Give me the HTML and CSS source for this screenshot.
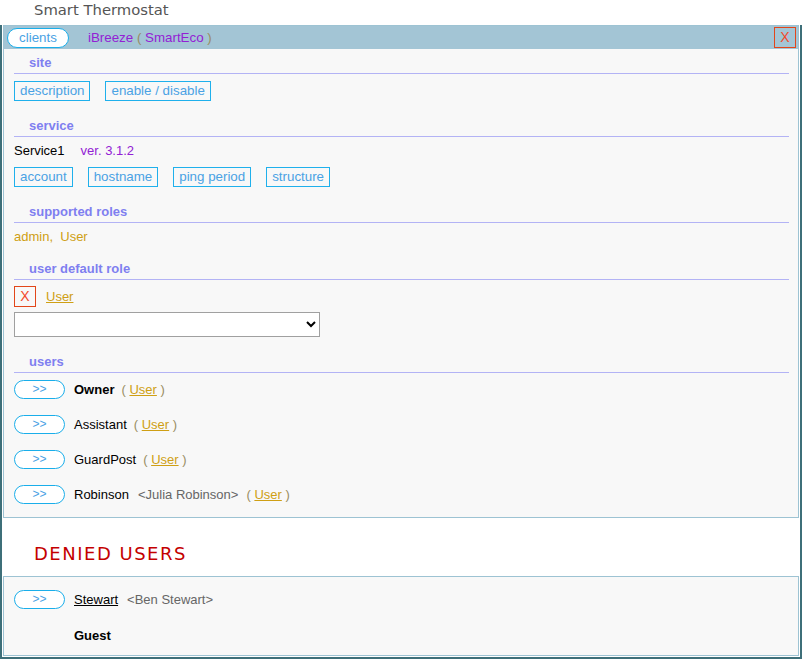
FILE: index.html
```html
<!DOCTYPE html>
<html>
<head>
<meta charset="utf-8">
<title>Smart Thermostat</title>
<link rel="stylesheet" href="styles.css">
</head>
<body>
<div class="title">Smart Thermostat</div>
<div class="frame">
  <div class="panel">
    <div class="panel-head">
      <button class="pill pill-clients">clients</button>
      <span class="client"><span class="purple">iBreeze</span> <span class="paren">(</span> <span class="purple">SmartEco</span> <span class="paren">)</span></span>
      <button class="xbtn xbtn-head">X</button>
    </div>
    <div class="panel-body">
      <div class="sec-head first">site</div>
      <div class="btn-row">
        <button class="lbtn">description</button>
        <button class="lbtn">enable / disable</button>
      </div>

      <div class="sec-head">service</div>
      <div class="line-row"><span class="dark">Service1</span><span class="purple ver">ver. 3.1.2</span></div>
      <div class="btn-row btn-row-tight">
        <button class="lbtn">account</button>
        <button class="lbtn">hostname</button>
        <button class="lbtn">ping period</button>
        <button class="lbtn">structure</button>
      </div>

      <div class="sec-head">supported roles</div>
      <div class="line-row gold">admin,&nbsp; User</div>

      <div class="sec-head sec-head-16">user default role</div>
      <div class="role-row">
        <button class="xbtn">X</button>
        <a class="gold-link">User</a>
      </div>
      <select class="role-select"><option></option></select>

      <div class="sec-head">users</div>
      <div class="users">
        <div class="user-row"><button class="pill pill-go">&gt;&gt;</button><span class="uname bold">Owner</span><span class="role"><span class="paren">(</span> <a class="gold-link">User</a> <span class="paren">)</span></span></div>
        <div class="user-row"><button class="pill pill-go">&gt;&gt;</button><span class="uname">Assistant</span><span class="role"><span class="paren">(</span> <a class="gold-link">User</a> <span class="paren">)</span></span></div>
        <div class="user-row"><button class="pill pill-go">&gt;&gt;</button><span class="uname">GuardPost</span><span class="role"><span class="paren">(</span> <a class="gold-link">User</a> <span class="paren">)</span></span></div>
        <div class="user-row"><button class="pill pill-go">&gt;&gt;</button><span class="uname">Robinson</span><span class="full">&lt;Julia Robinson&gt;</span><span class="role"><span class="paren">(</span> <a class="gold-link">User</a> <span class="paren">)</span></span></div>
      </div>
    </div>
  </div>

  <div class="denied-title">DENIED USERS</div>

  <div class="panel denied">
    <div class="user-row"><button class="pill pill-go">&gt;&gt;</button><a class="uname ulink">Stewart</a><span class="full">&lt;Ben Stewart&gt;</span></div>
    <div class="guest bold">Guest</div>
  </div>
</div>
</body>
</html>
```

FILE: styles.css
```css
* { box-sizing: border-box; }
html, body { margin: 0; padding: 0; background: #fff; }
body {
  width: 802px;
  font-family: "Liberation Sans", Arial, sans-serif;
  font-size: 13px;
  color: #000;
}
button { font-family: inherit; font-size: 13.333px; cursor: pointer; }

.title {
  height: 25px;
  padding-left: 34px;
  font-family: "DejaVu Sans", Verdana, sans-serif;
  font-size: 14.8px;
  line-height: 20px;
  color: #555;
}

.frame {
  border: 2px solid #3e6f79;
  border-top: 0;
  padding: 0 1px 1px 1px;
  height: 634px;
}

.panel {
  border: 1px solid #9dc3d3;
  background: #f8f8f8;
}

.panel-head {
  display: flex;
  align-items: center;
  height: 23px;
  background: #a3c5d5;
  padding: 0 2px 0 3px;
}
.client { margin-left: 19px; line-height: 16px; font-size: 13.333px; }
.purple { color: #9321d4; }
.paren { color: #998d62; }

.pill {
  height: 20px;
  border: 1px solid #1aaeea;
  border-radius: 10px;
  background: #fff;
  color: #4aa2e4;
  padding: 0;
  line-height: 18px;
}
.pill-clients { width: 62px; }
.pill-go { width: 51px; height: 19px; font-size: 12px; line-height: 17px; flex: none; }

.xbtn {
  width: 22px;
  height: 21px;
  border: 1px solid #e2461a;
  background: transparent;
  color: #f24a2c;
  padding: 0;
  line-height: 19px;
  font-size: 14px;
}
.xbtn-head { margin-left: auto; }

.panel-body { padding: 0 9px 13px 10px; }

.sec-head {
  margin-top: 17px;
  padding-left: 15px;
  line-height: 16px;
  padding-bottom: 2px;
  border-bottom: 1px solid #b3b3f5;
  color: #7f7ff0;
  font-weight: bold;
}
.sec-head.first { margin-top: 6px; }
.sec-head-16 { margin-top: 16px; }

.btn-row {
  display: flex;
  gap: 15px;
  margin-top: 7px;
}
.btn-row-tight { margin-top: 8px; }
.lbtn {
  height: 20px;
  border: 1px solid #1fb0ec;
  background: transparent;
  color: #4aa2e4;
  padding: 0 5px;
  line-height: 18px;
}

.line-row { margin-top: 6px; line-height: 16px; }
.dark { color: #000; }
.ver { margin-left: 16px; }
.gold { color: #cf9f14; }

.role-row {
  display: flex;
  align-items: center;
  gap: 10px;
  margin-top: 6px;
  height: 21px;
}
.gold-link { color: #cf9f14; text-decoration: underline; }

.role-select {
  display: block;
  margin-top: 5px;
  width: 306px;
  height: 25px;
  border: 1px solid #a0a0a0;
  border-radius: 0;
  background: #fff;
  font-family: inherit;
  font-size: 13px;
}

.users {
  display: flex;
  flex-direction: column;
  gap: 16px;
  margin-top: 7px;
}
.user-row {
  display: flex;
  align-items: center;
  height: 19px;
  line-height: 16px;
}
.uname { margin-left: 9px; color: #000; }
.bold { font-weight: bold; }
.role { margin-left: 7px; }
.full { margin-left: 9px; color: #666; }
.full + .role { margin-left: 8px; }
.ulink { text-decoration: underline; }

.denied-title {
  height: 58px;
  padding: 26px 0 0 31px;
  font-family: "DejaVu Sans", Verdana, sans-serif;
  font-size: 18px;
  letter-spacing: 1.5px;
  line-height: 20px;
  color: #c40000;
}

.denied {
  height: 80px;
  padding: 13px 10px 0 10px;
}
.guest { margin: 19px 0 0 60px; line-height: 16px; color: #000; }
```
